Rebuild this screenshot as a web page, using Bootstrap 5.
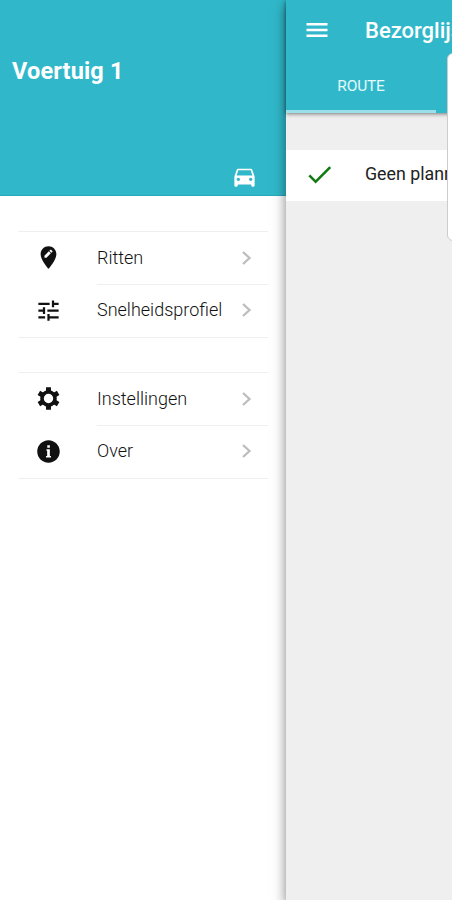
<!DOCTYPE html>
<html lang="nl">
<head>
<meta charset="utf-8">
<meta name="viewport" content="width=device-width, initial-scale=1">
<title>Voertuig 1</title>
<link href="https://cdn.jsdelivr.net/npm/bootstrap@5.3.0/dist/css/bootstrap.min.css" rel="stylesheet">
<style>
  body { font-family: Roboto, "Liberation Sans", sans-serif; color: #222; }
  svg { display: block; fill: currentColor; flex: none; }
  .screen { width: 452px; height: 900px; }
  .side { width: 286px; background: #fff; }
  .side-head { height: 196px; background: #30b8ca; border-bottom: 1px solid #28a9ba; padding: 56px 28px 5px 12px; }
  .side-title { font-size: 23.5px; line-height: 30px; font-weight: 700; letter-spacing: .15px; }
  .menu-group { margin: 35px 18px 0 18px; border-top: 1px solid #efefef; border-bottom: 1px solid #efefef; }
  .menu-group + .menu-group { margin-top: 34px; }
  .menu-row { height: 52px; padding: 0 0 1px 17px; }
  .menu-row + .menu-row { height: 53px; padding-bottom: 0; }
  .menu-icon { width: 62px; color: #111; }
  .menu-label { font-size: 18px; line-height: 24px; font-weight: 300; color: #111; padding-right: 15px; white-space: nowrap; }
  .menu-row + .menu-row .menu-label { border-top: 1px solid #efefef; padding-bottom: 2px; }
  .chev { fill: none; stroke: #bdbdbd; stroke-width: 2.3; }
  .main-pane { background: #efefef; box-shadow: 0 5px 12px rgba(0,0,0,.5); z-index: 2; }
  .bar { height: 113px; background: #30b8ca; box-shadow: 0 1px 4px rgba(0,0,0,.5); }
  .bar-top { height: 60px; padding-left: 17px; gap: 34px; }
  .bar-title { font-size: 22px; font-weight: 500; white-space: nowrap; }
  .tab-route { width: 150px; height: 53px; padding-top: 3px; font-size: 15.5px; border-bottom: 3px solid #9be0e9; color: #e6f9fb; letter-spacing: -.2px; }
  .status-row { margin-top: 37px; height: 51px; background: #fff; padding: 0 0 2px 18px; gap: 30px; font-size: 17.8px; white-space: nowrap; }
  .check { color: #127a12; }
  .popover-edge { left: 161px; top: 53px; width: 40px; height: 188px; background: #fff; border: 1px solid #ccc; border-radius: 6px; }
</style>
<script src="https://cdn.jsdelivr.net/npm/bootstrap@5.3.0/dist/js/bootstrap.bundle.min.js"></script>
</head>
<body class="m-0 overflow-hidden">
<div class="screen d-flex overflow-hidden">
  <aside class="side flex-shrink-0">
    <header class="side-head d-flex flex-column justify-content-between text-white">
      <div class="side-title">Voertuig 1</div>
      <svg class="align-self-end" width="27" height="27" viewBox="0 0 24 24"><path d="M18.92 6.01C18.72 5.42 18.16 5 17.5 5h-11c-.66 0-1.21.42-1.42 1.01L3 12v8c0 .55.45 1 1 1h1c.55 0 1-.45 1-1v-1h12v1c0 .55.45 1 1 1h1c.55 0 1-.45 1-1v-8l-2.08-5.99zM6.5 16c-.83 0-1.5-.67-1.5-1.5S5.67 13 6.5 13s1.5.67 1.5 1.5S7.33 16 6.5 16zm11 0c-.83 0-1.5-.67-1.5-1.5s.67-1.5 1.5-1.5 1.5.67 1.5 1.5-.67 1.5-1.5 1.5zM5 11l1.5-4.5h11L19 11H5z"/></svg>
    </header>
    <nav>
      <div class="menu-group">
        <div class="menu-row d-flex align-items-center">
          <div class="menu-icon"><svg width="27" height="27" viewBox="0 0 24 24"><path fill-rule="evenodd" d="M12 2C8.14 2 5 5.14 5 9c0 5.25 7 13 7 13s7-7.75 7-13c0-3.86-3.14-7-7-7zM8.4 12.2v-1.8l3.9-3.9 1.8 1.8-3.9 3.9H8.4zM15.4 7l-.8.8L12.8 6l.8-.8c.2-.2.5-.2.7 0l1.1 1.1c.2.2.2.5 0 .7z"/></svg></div>
          <div class="menu-label flex-grow-1 h-100 d-flex align-items-center justify-content-between">Ritten<svg class="chev" width="13" height="16" viewBox="0 0 13 16"><path d="M3 2l6.5 6L3 14"/></svg></div>
        </div>
        <div class="menu-row d-flex align-items-center">
          <div class="menu-icon"><svg width="27" height="27" viewBox="0 0 24 24"><path d="M3 17v2h6v-2H3zM3 5v2h10V5H3zm10 16v-2h8v-2h-8v-2h-2v6h2zM7 9v2H3v2h4v2h2V9H7zm14 4v-2H11v2h10zm-6-4h2V7h4V5h-4V3h-2v6z"/></svg></div>
          <div class="menu-label flex-grow-1 h-100 d-flex align-items-center justify-content-between">Snelheidsprofiel<svg class="chev" width="13" height="16" viewBox="0 0 13 16"><path d="M3 2l6.5 6L3 14"/></svg></div>
        </div>
      </div>
      <div class="menu-group">
        <div class="menu-row d-flex align-items-center">
          <div class="menu-icon"><svg width="27" height="27" viewBox="0 0 24 24"><g fill="none" stroke="currentColor"><circle cx="12" cy="12" r="5.8" stroke-width="3.2"/><path stroke-width="4.4" d="M12 5.5V2.1M12 18.5v3.4M17.63 8.75l2.94-1.7M6.37 15.25l-2.94 1.7M17.63 15.25l2.94 1.7M6.37 8.75l-2.94-1.7"/></g></svg></div>
          <div class="menu-label flex-grow-1 h-100 d-flex align-items-center justify-content-between">Instellingen<svg class="chev" width="13" height="16" viewBox="0 0 13 16"><path d="M3 2l6.5 6L3 14"/></svg></div>
        </div>
        <div class="menu-row d-flex align-items-center">
          <div class="menu-icon"><svg width="27" height="27" viewBox="0 0 24 24"><path fill-rule="evenodd" d="M12 2C6.48 2 2 6.48 2 12s4.48 10 10 10 10-4.48 10-10S17.52 2 12 2zM10.2 10h3v6h1v1.4h-4.4V16h1v-4.6h-.6zM10.9 6.5h2.3v2.2h-2.3z"/></svg></div>
          <div class="menu-label flex-grow-1 h-100 d-flex align-items-center justify-content-between">Over<svg class="chev" width="13" height="16" viewBox="0 0 13 16"><path d="M3 2l6.5 6L3 14"/></svg></div>
        </div>
      </div>
    </nav>
  </aside>
  <main class="main-pane position-relative flex-grow-1">
    <header class="bar text-white">
      <div class="bar-top d-flex align-items-center">
        <svg width="28" height="28" viewBox="0 0 24 24"><path d="M3 18h18v-2.2H3V18zm0-4.9h18v-2.2H3v2.2zM3 6v2.2h18V6H3z"/></svg>
        <div class="bar-title">Bezorglijst</div>
      </div>
      <div class="tab-route d-flex align-items-center justify-content-center">ROUTE</div>
    </header>
    <div class="status-row d-flex align-items-center">
      <svg class="check" width="31" height="31" viewBox="0 0 24 24"><path d="M9 16.17L4.83 12l-1.42 1.41L9 19 21 7l-1.41-1.41z"/></svg>
      <span>Geen planning</span>
    </div>
    <div class="popover-edge position-absolute"></div>
  </main>
</div>
</body>
</html>
